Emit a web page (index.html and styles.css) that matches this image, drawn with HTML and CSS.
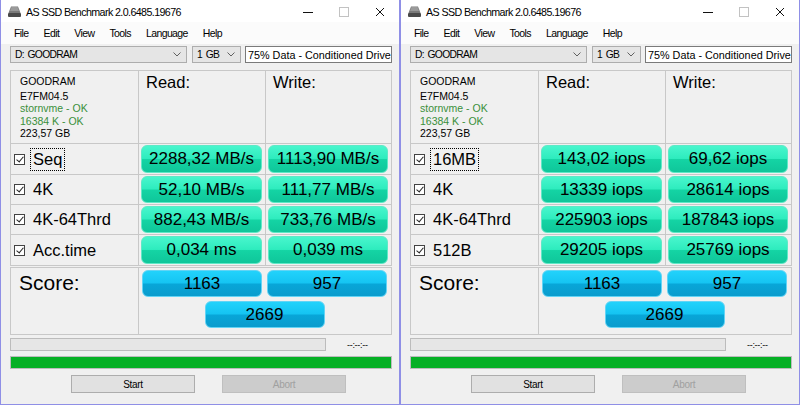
FILE: index.html
```html
<!DOCTYPE html>
<html lang="en">
<head>
    <meta charset="UTF-8">
    <meta name="viewport" content="width=device-width, initial-scale=1.0">
    <title>AS SSD Benchmark</title>
    <link rel="stylesheet" href="styles.css">
</head>
<body>
<div class="desktop">

    <!-- Window 1: MB/s -->
    <div class="window">
        <div class="titlebar">
            <svg class="title-icon" width="13" height="11" viewBox="0 0 13 11">
                <path d="M3 0.5h7l2.5 6.5h-12z" fill="#7a7a7a"/>
                <path d="M3.5 1h6l1.5 4h-9z" fill="#9a9a9a"/>
                <rect x="0" y="7" width="13" height="4" rx="1" fill="#4a4a4a"/>
            </svg>
            <span class="title-text">AS SSD Benchmark 2.0.6485.19676</span>
            <div class="win-controls">
                <span class="win-btn"><svg width="10" height="10"><path d="M0 5.5h10" stroke="#111" stroke-width="1"/></svg></span>
                <span class="win-btn"><svg width="10" height="10"><rect x="0.5" y="0.5" width="9" height="9" fill="none" stroke="#c2c2c2"/></svg></span>
                <span class="win-btn"><svg width="10" height="10"><path d="M1 1l8 8M9 1l-8 8" stroke="#111" stroke-width="1"/></svg></span>
            </div>
        </div>
        <div class="menubar">
            <span>File</span><span>Edit</span><span>View</span><span>Tools</span><span>Language</span><span>Help</span>
        </div>
        <div class="toolbar">
            <div class="combo combo-drive">D: GOODRAM <svg width="8" height="5"><path d="M0.5 0.5l3.5 3.5 3.5-3.5" fill="none" stroke="#606060"/></svg></div>
            <div class="combo combo-size">1 GB <svg width="8" height="5"><path d="M0.5 0.5l3.5 3.5 3.5-3.5" fill="none" stroke="#606060"/></svg></div>
            <div class="textbox">75% Data - Conditioned Drive</div>
        </div>

        <div class="bench">
            <div class="cell info">
                <div class="info-name">GOODRAM</div>
                <div>E7FM04.5</div>
                <div class="ok">stornvme - OK</div>
                <div class="ok">16384 K - OK</div>
                <div>223,57 GB</div>
            </div>
            <div class="cell col-head">Read:</div>
            <div class="cell col-head">Write:</div>

            <div class="cell test"><span class="check"></span><span class="test-name focused">Seq</span></div>
            <div class="cell"><div class="value">2288,32 MB/s</div></div>
            <div class="cell"><div class="value">1113,90 MB/s</div></div>

            <div class="cell test"><span class="check"></span><span class="test-name">4K</span></div>
            <div class="cell"><div class="value">52,10 MB/s</div></div>
            <div class="cell"><div class="value">111,77 MB/s</div></div>

            <div class="cell test"><span class="check"></span><span class="test-name">4K-64Thrd</span></div>
            <div class="cell"><div class="value">882,43 MB/s</div></div>
            <div class="cell"><div class="value">733,76 MB/s</div></div>

            <div class="cell test"><span class="check"></span><span class="test-name">Acc.time</span></div>
            <div class="cell"><div class="value">0,034 ms</div></div>
            <div class="cell"><div class="value">0,039 ms</div></div>
        </div>

        <div class="score-panel">
            <div class="score-label">Score:</div>
            <div class="score-values">
                <div class="score">1163</div>
                <div class="score">957</div>
                <div class="score score-total">2669</div>
            </div>
        </div>

        <div class="progress-row">
            <div class="progress"></div>
            <span class="time">--:--:--</span>
        </div>
        <div class="progress progress-done"></div>

        <div class="buttons">
            <button class="btn">Start</button>
            <button class="btn btn-disabled">Abort</button>
        </div>
    </div>

    <!-- Window 2: IOPS -->
    <div class="window">
        <div class="titlebar">
            <svg class="title-icon" width="13" height="11" viewBox="0 0 13 11">
                <path d="M3 0.5h7l2.5 6.5h-12z" fill="#7a7a7a"/>
                <path d="M3.5 1h6l1.5 4h-9z" fill="#9a9a9a"/>
                <rect x="0" y="7" width="13" height="4" rx="1" fill="#4a4a4a"/>
            </svg>
            <span class="title-text">AS SSD Benchmark 2.0.6485.19676</span>
            <div class="win-controls">
                <span class="win-btn"><svg width="10" height="10"><path d="M0 5.5h10" stroke="#111" stroke-width="1"/></svg></span>
                <span class="win-btn"><svg width="10" height="10"><rect x="0.5" y="0.5" width="9" height="9" fill="none" stroke="#c2c2c2"/></svg></span>
                <span class="win-btn"><svg width="10" height="10"><path d="M1 1l8 8M9 1l-8 8" stroke="#111" stroke-width="1"/></svg></span>
            </div>
        </div>
        <div class="menubar">
            <span>File</span><span>Edit</span><span>View</span><span>Tools</span><span>Language</span><span>Help</span>
        </div>
        <div class="toolbar">
            <div class="combo combo-drive">D: GOODRAM <svg width="8" height="5"><path d="M0.5 0.5l3.5 3.5 3.5-3.5" fill="none" stroke="#606060"/></svg></div>
            <div class="combo combo-size">1 GB <svg width="8" height="5"><path d="M0.5 0.5l3.5 3.5 3.5-3.5" fill="none" stroke="#606060"/></svg></div>
            <div class="textbox">75% Data - Conditioned Drive</div>
        </div>

        <div class="bench">
            <div class="cell info">
                <div class="info-name">GOODRAM</div>
                <div>E7FM04.5</div>
                <div class="ok">stornvme - OK</div>
                <div class="ok">16384 K - OK</div>
                <div>223,57 GB</div>
            </div>
            <div class="cell col-head">Read:</div>
            <div class="cell col-head">Write:</div>

            <div class="cell test"><span class="check"></span><span class="test-name focused">16MB</span></div>
            <div class="cell"><div class="value">143,02 iops</div></div>
            <div class="cell"><div class="value">69,62 iops</div></div>

            <div class="cell test"><span class="check"></span><span class="test-name">4K</span></div>
            <div class="cell"><div class="value">13339 iops</div></div>
            <div class="cell"><div class="value">28614 iops</div></div>

            <div class="cell test"><span class="check"></span><span class="test-name">4K-64Thrd</span></div>
            <div class="cell"><div class="value">225903 iops</div></div>
            <div class="cell"><div class="value">187843 iops</div></div>

            <div class="cell test"><span class="check"></span><span class="test-name">512B</span></div>
            <div class="cell"><div class="value">29205 iops</div></div>
            <div class="cell"><div class="value">25769 iops</div></div>
        </div>

        <div class="score-panel">
            <div class="score-label">Score:</div>
            <div class="score-values">
                <div class="score">1163</div>
                <div class="score">957</div>
                <div class="score score-total">2669</div>
            </div>
        </div>

        <div class="progress-row">
            <div class="progress"></div>
            <span class="time">--:--:--</span>
        </div>
        <div class="progress progress-done"></div>

        <div class="buttons">
            <button class="btn">Start</button>
            <button class="btn btn-disabled">Abort</button>
        </div>
    </div>

</div>
</body>
</html>
```

FILE: styles.css
```css
body {
    margin: 0;
    background: #ffffff;
    font-family: "Liberation Sans", Arial, sans-serif;
    color: #000;
}
.desktop {
    display: flex;
    width: 800px;
    height: 405px;
    overflow: hidden;
}
.window {
    width: 400px;
    height: 405px;
    box-sizing: border-box;
    border: 1px solid #8f8fe6;
    border-top: none;
    background: #f0f0f0;
    padding: 0 7px 0 9px;
    display: flex;
    flex-direction: column;
}

/* title bar */
.titlebar {
    height: 22px;
    margin: 0 -7px 0 -9px;
    background: #fff;
    display: flex;
    align-items: center;
    font-size: 10.7px;
    letter-spacing: -0.6px;
}
.title-icon {
    margin: 1px 5px 0 7px;
}
.title-text {
    flex: 1;
    padding-top: 2px;
}
.win-controls {
    display: flex;
    margin-right: 1px;
}
.win-btn {
    width: 36px;
    height: 22px;
    display: flex;
    align-items: center;
    justify-content: center;
    padding-top: 2px;
    box-sizing: border-box;
}

/* menu */
.menubar {
    height: 22px;
    margin: 0 -7px 0 -9px;
    padding-left: 13px;
    background: #fbfbfb;
    display: flex;
    align-items: center;
    gap: 15px;
    font-size: 10.5px;
    letter-spacing: -0.6px;
}

/* toolbar row */
.toolbar {
    display: flex;
    height: 17px;
    margin-top: 2px;
}
.combo {
    box-sizing: border-box;
    border: 1px solid #adadad;
    background: #e5e5e5;
    display: flex;
    align-items: center;
    justify-content: space-between;
    padding: 0 5px 0 4px;
    font-size: 10.3px;
    letter-spacing: -0.7px;
    word-spacing: 1.5px;
}
.combo-drive {
    width: 177px;
}
.combo-size {
    width: 49px;
    margin-left: 5px;
}
.textbox {
    box-sizing: border-box;
    flex: 1;
    margin-left: 4px;
    border: 1px solid #7a7a7a;
    background: #fff;
    padding: 0 0 0 2px;
    display: flex;
    align-items: center;
    white-space: nowrap;
    overflow: hidden;
    font-size: 10.8px;
}

/* benchmark table */
.bench {
    margin-top: 7px;
    display: grid;
    grid-template-columns: 127px 126px 1fr;
    grid-template-rows: 72px 30px 29px 29px 30px;
    gap: 1px;
    background: #c8c8c8;
    border: 1px solid #c8c8c8;
}
.cell {
    background: #f0f0f0;
    box-sizing: border-box;
    padding: 1px 3px 1px 2px;
}
.info {
    padding: 4px 0 0 9px;
    font-size: 10.5px;
    line-height: 12.5px;
}
.info-name {
    margin-bottom: 2px;
}
.ok {
    color: #3a8f3a;
}
.col-head {
    font-size: 16.5px;
    padding: 2px 0 0 7px;
}
.test {
    display: flex;
    align-items: center;
    padding: 0 0 0 3px;
    font-size: 16.5px;
}
.check {
    width: 11px;
    height: 11px;
    box-sizing: border-box;
    border: 1px solid #444;
    background: #fff;
    position: relative;
    margin-right: 5px;
}
.check::after {
    content: "";
    position: absolute;
    left: 2.5px;
    top: 0px;
    width: 3px;
    height: 6px;
    border: solid #222;
    border-width: 0 1.2px 1.2px 0;
    transform: rotate(40deg);
}
.test-name {
    padding: 1px 2px;
    border: 1px dotted transparent;
}
.focused {
    border-color: #000;
}
.value {
    height: 100%;
    box-sizing: border-box;
    border: 1px solid #5ee9c6;
    border-radius: 6px;
    background: linear-gradient(#48f6cd 0%, #2eecbe 48%, #14d4a4 52%, #0fc69a 100%);
    display: flex;
    align-items: center;
    justify-content: center;
    font-size: 17px;
}

/* score panel */
.score-panel {
    margin-top: 1px;
    height: 68px;
    box-sizing: border-box;
    border: 1px solid #c8c8c8;
    display: flex;
}
.score-label {
    width: 128px;
    border-right: 1px solid #c8c8c8;
    font-size: 21px;
    padding: 3px 0 0 8px;
    box-sizing: border-box;
}
.score-values {
    flex: 1;
    display: grid;
    grid-template-columns: 120px 120px;
    grid-template-rows: 27px 27px;
    column-gap: 5px;
    row-gap: 4px;
    padding: 2px 0 0 3px;
}
.score {
    box-sizing: border-box;
    border: 1px solid #62d4f5;
    border-radius: 6px;
    background: linear-gradient(#22d2fb 0%, #15c4f2 48%, #08a6d8 52%, #0a9ccd 100%);
    display: flex;
    align-items: center;
    justify-content: center;
    font-size: 17px;
}
.score-total {
    grid-column: 1 / span 2;
    justify-self: center;
    width: 120px;
}

/* progress */
.progress-row {
    margin-top: 3px;
    display: flex;
    align-items: center;
}
.progress {
    height: 13px;
    box-sizing: border-box;
    border: 1px solid #bcbcbc;
    background: #e6e6e6;
}
.progress-row .progress {
    width: 316px;
}
.time {
    font-size: 9px;
    margin-left: 21px;
    letter-spacing: -0.3px;
}
.progress-done {
    margin-top: 5px;
    background: #06b025;
}

/* buttons */
.buttons {
    margin-top: 6px;
    display: flex;
    gap: 27px;
    padding-left: 61px;
}
.btn {
    width: 124px;
    height: 18px;
    box-sizing: border-box;
    border: 1px solid #adadad;
    background: #e1e1e1;
    font-family: "Liberation Sans", Arial, sans-serif;
    font-size: 10px;
    letter-spacing: -0.3px;
    padding: 0;
    color: #000;
}
.btn-disabled {
    background: #cccccc;
    border-color: #bfbfbf;
    color: #a0a0a0;
}
```
